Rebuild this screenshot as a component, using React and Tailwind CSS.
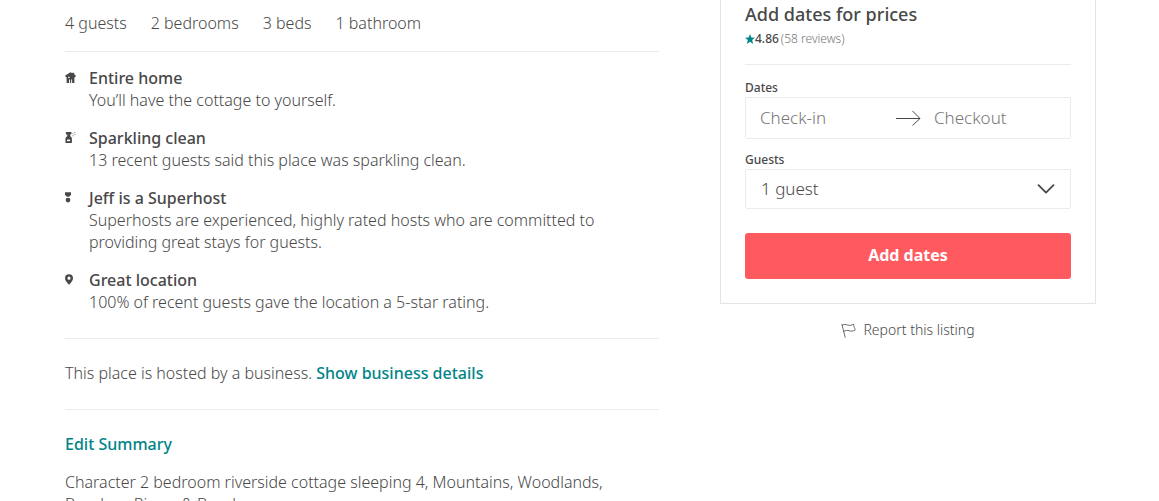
const HomeIcon = () => (
    <svg viewBox="0 0 24 24" className="w-[11px] h-[11px]" fill="currentColor" aria-hidden="true">
        <path d="M12 0.5 0.5 7.500 1.500 11.500h2V24H9v-7.500h2V24h9.500V11.500h2l1-4L20 5V1.500h-4v1.200z" />
        <path d="M13.500 16.500h2V24h-2zM7 10.500h3v2.500H7z" fill="#fff" />
    </svg>
);

const SprayIcon = () => (
    <svg viewBox="0 0 24 24" className="w-[11px] h-[11px]" fill="currentColor" aria-hidden="true">
        <path d="M2 0h12v5h-2.500v3.500L15 13v11H1V13l4-4.500V5.500H2z" />
        <path d="M4.500 16.500h6.500V20H4.500z" fill="#fff" />
        <path d="M16 2h2.500v2H16zM20 0h2.500v2H20zM20.500 4.500H23v2h-2.500zM16.500 7H19v2h-2.500z" opacity=".6" />
    </svg>
);

const SuperhostIcon = () => (
    <svg viewBox="0 0 14 24" className="w-[6px] h-[11px]" fill="currentColor" aria-hidden="true">
        <path d="M0 0h14v5.500L9.500 10h-5L0 5.500z" />
        <circle cx="7" cy="18" r="5.500" />
    </svg>
);

const PinIcon = () => (
    <svg viewBox="0 0 18 24" className="w-[8px] h-[11px]" fill="currentColor" aria-hidden="true">
        <path fillRule="evenodd" d="M9 0a9 9 0 0 0-9 9c0 5 4.500 10 9 15 4.500-5 9-10 9-15a9 9 0 0 0-9-9zm0 5.500a3.500 3.500 0 1 1 0 7 3.500 3.500 0 0 1 0-7z" />
    </svg>
);

const stats = ['4 guests', '2 bedrooms', '3 beds', '1 bathroom'];

const features = [
    { icon: HomeIcon, title: 'Entire home', text: 'You’ll have the cottage to yourself.' },
    { icon: SprayIcon, title: 'Sparkling clean', text: '13 recent guests said this place was sparkling clean.' },
    {
        icon: SuperhostIcon,
        title: 'Jeff is a Superhost',
        text: 'Superhosts are experienced, highly rated hosts who are committed to providing great stays for guests.'
    },
    { icon: PinIcon, title: 'Great location', text: '100% of recent guests gave the location a 5-star rating.' }
];

const ListingDetails = () => (
    <main className="flex-1 min-w-0 text-base/[22px]">
        <ul className="flex flex-wrap gap-x-6 pt-3 pb-[17px] border-b border-[#ebebeb]">
            {stats.map((stat) => (
                <li key={stat}>{stat}</li>
            ))}
        </ul>

        <ul className="flex flex-col gap-4 pt-[15px] pb-[25px] border-b border-[#ebebeb]">
            {features.map(({ icon: Icon, title, text }) => (
                <li key={title} className="flex">
                    <span className="w-6 shrink-0 pt-[5px]">
                        <Icon />
                    </span>
                    <div>
                        <h3 className="font-medium">{title}</h3>
                        <p>{text}</p>
                    </div>
                </li>
            ))}
        </ul>

        <p className="pt-[23px] pb-[25px] border-b border-[#ebebeb]">
            This place is hosted by a business.{' '}
            <a href="#business" className="font-medium text-[#008489]">Show business details</a>
        </p>

        <section className="pt-[23px]">
            <a href="#summary" className="block w-fit font-medium text-[#008489]">Edit Summary</a>
            <p className="pt-4">
                Character 2 bedroom riverside cottage sleeping 4, Mountains, Woodlands, Beaches, Rivers &amp; Beaches
            </p>
        </section>
    </main>
);

const BookingCard = () => (
    <aside className="w-[376px] shrink-0">
        <form className="px-6 pb-6 border border-t-0 border-[#e4e4e4]">
            <h2 className="pt-[2px] text-lg/6 font-medium">Add dates for prices</h2>
            <div className="flex items-center pt-[5px] pb-[17px] border-b border-[#ebebeb] text-xs">
                <svg viewBox="0 0 24 24" className="w-[10px] h-[10px] text-[#008489]" fill="currentColor" aria-hidden="true">
                    <path d="M12 0l3.300 8.400 8.700.5-6.800 5.600L19.500 24 12 18.800 4.500 24l2.300-9.500L0 8.900l8.700-.5z" />
                </svg>
                <span className="font-medium">4.86</span>
                <span className="pl-[2px] text-[#767676]">(58 reviews)</span>
            </div>

            <label htmlFor="checkin" className="block pt-[15px] text-xs font-medium">Dates</label>
            <div className="flex items-center mt-px h-[42px] pl-[14px] border border-[#ebebeb] rounded-xs text-[17px]">
                <input
                    id="checkin"
                    type="text"
                    placeholder="Check-in"
                    className="flex-1 min-w-0 outline-none placeholder:text-[#767676]"
                />
                <svg viewBox="0 0 26 16" className="w-[26px] h-4 shrink-0 mr-3" fill="none" stroke="currentColor" aria-hidden="true">
                    <path d="M0 8.500h24M16.500 1l7.500 7.500-7.500 7" />
                </svg>
                <input
                    type="text"
                    placeholder="Checkout"
                    aria-label="Checkout"
                    className="flex-1 min-w-0 outline-none placeholder:text-[#767676]"
                />
            </div>

            <label htmlFor="guests" className="block pt-[13px] text-xs font-medium">Guests</label>
            <div className="relative mt-px">
                <select
                    id="guests"
                    className="block w-full h-10 pl-[15px] pr-10 appearance-none bg-white border border-[#ebebeb] rounded-xs text-[17px]"
                >
                    <option>1 guest</option>
                    <option>2 guests</option>
                    <option>3 guests</option>
                    <option>4 guests</option>
                </select>
                <svg
                    viewBox="0 0 18 10"
                    className="absolute right-4 top-[15px] w-[18px] h-[10px] pointer-events-none"
                    fill="none"
                    stroke="currentColor"
                    strokeWidth="1.800"
                    strokeLinecap="round"
                    strokeLinejoin="round"
                    aria-hidden="true"
                >
                    <path d="M1.500 1.200 9 8.700l7.500-7.500" />
                </svg>
            </div>

            <button type="button" className="w-full h-[46px] pb-[2px] mt-6 rounded-[3px] bg-[#ff5a5f] text-white text-base font-bold">
                Add dates
            </button>
        </form>

        <button type="button" className="flex items-center mx-auto mt-4 gap-[7px] text-sm">
            <svg viewBox="0 0 15 15" className="w-[15px] h-[15px]" fill="none" stroke="currentColor" strokeWidth=".8" strokeLinecap="round" aria-hidden="true">
                <path d="M1 1.500l3.200 12.800M1.200 2.200c2-1.200 3.500-.7 5.300-.2s3.800.6 6-.9c.2 1 .2 1.800.6 2.600.2 1.200 1.300 2.200.9 3.500-1.500 1-3.500 1.100-5.500.6S4.500 7 2.700 8.400" />
            </svg>
            Report this listing
        </button>
    </aside>
);

export default function App() {
    return (
        <div className="flex gap-[61px] h-screen overflow-hidden pl-[65px] pr-[63px] bg-white text-[#484848] font-['Noto_Sans',sans-serif] font-[330]">
            <ListingDetails />
            <BookingCard />
        </div>
    );
}
